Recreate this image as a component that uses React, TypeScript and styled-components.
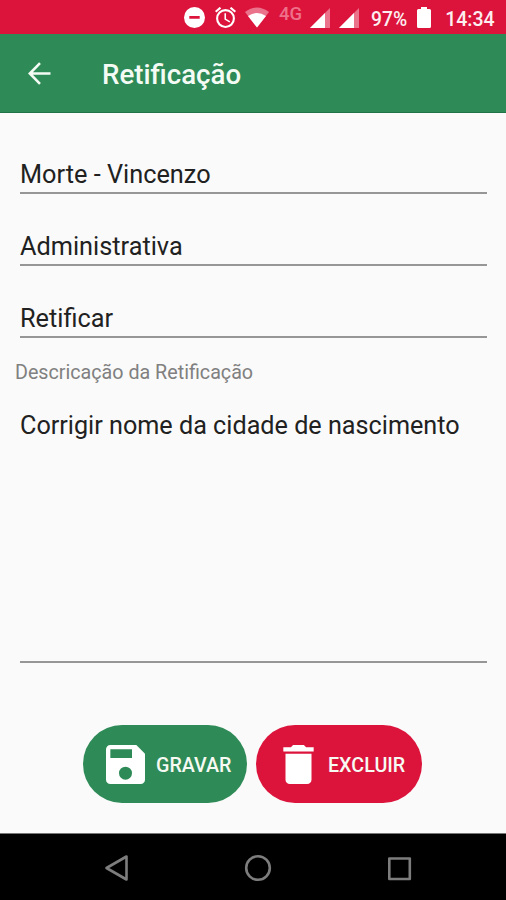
import React from "react";
import styled, { createGlobalStyle } from "styled-components";

const GlobalStyle = createGlobalStyle`
  * { box-sizing: border-box; }
  body { margin: 0; background: #fafafa; font-family: Roboto, sans-serif; }
`;

const Screen = styled.div`
  width: 506px;
  height: 900px;
  display: flex;
  flex-direction: column;
  background: #fafafa;
  overflow: hidden;
`;

const StatusBar = styled.header`
  height: 34px;
  flex: none;
  display: flex;
  align-items: flex-start;
  background: #dc143c;
  color: #fdeef0;
  padding-left: 184px;
`;

const StatusIcon = styled.svg<{ $gap?: number }>`
  flex: none;
  display: block;
  margin: 7px 0 0 ${(p) => p.$gap ?? 0}px;
  fill: #fff;
`;

const StatusText = styled.span<{ $gap: number; $size?: number }>`
  font-size: ${(p) => p.$size ?? 19.5}px;
  font-weight: 500;
  line-height: 22px;
  margin: 9px 0 0 ${(p) => p.$gap}px;
  white-space: nowrap;
`;

const NetworkLabel = styled.span`
  font-size: 18.5px;
  font-weight: 500;
  line-height: 20px;
  width: 24px;
  margin: 4px 0 0 9px;
  color: #ee7089;
`;

const AppBar = styled.div`
  height: 79px;
  flex: none;
  display: flex;
  align-items: center;
  padding-left: 28px;
  background: #2e8b57;
  border-bottom: 1px solid #207346;
`;

const Title = styled.h1`
  margin: 3px 0 0 51px;
  font-size: 27.7px;
  line-height: 34px;
  font-weight: 500;
  color: #f4fbf5;
`;

const Form = styled.main`
  flex: 1;
  display: flex;
  flex-direction: column;
  padding: 42px 19px 0 20px;
`;

const Field = styled.div<{ $height: number; $gap?: number }>`
  flex: none;
  height: ${(p) => p.$height}px;
  margin-top: ${(p) => p.$gap ?? 0}px;
  border-bottom: 2px solid #969696;
  font-size: 25.3px;
  line-height: 40px;
  color: #212121;
  white-space: nowrap;
`;

const DescriptionField = styled(Field)`
  font-size: 25.2px;
  line-height: 38px;
`;

const Label = styled.label`
  margin: 22px 0 0 -5px;
  font-size: 19.7px;
  line-height: 26px;
  color: #808080;
`;

const Actions = styled.div`
  display: flex;
  gap: 9px;
  margin: 62px 0 0 63px;
`;

const ActionButton = styled.button<{ $color: string; $width: number; $inset: number; $gap: number }>`
  width: ${(p) => p.$width}px;
  height: 78px;
  flex: none;
  display: flex;
  align-items: center;
  gap: ${(p) => p.$gap}px;
  padding: 0 0 0 ${(p) => p.$inset}px;
  border: 0;
  border-radius: 39px;
  background: ${(p) => p.$color};
  color: #f6faf3;
  font: 500 19.7px/24px Roboto, sans-serif;
  svg { flex: none; fill: #fff; }
  span { padding-top: 4px; }
`;

const NavBar = styled.nav`
  height: 67px;
  flex: none;
  display: flex;
  align-items: center;
  justify-content: space-between;
  padding: 1px 93px 0 102px;
  background: #000;
  border-top: 1px solid #777;
  svg { fill: none; stroke: #7d7d7d; stroke-width: 2.6; stroke-linejoin: round; }
`;

const Signal = ({ gap }: { gap: number }) => (
  <StatusIcon width="20" height="21" viewBox="0 0 20 21" $gap={gap}>
    <path d="M0 21 20 1v20z" opacity="0.4" />
    <path d="M0 21 15 6v15z" />
  </StatusIcon>
);

export default function App() {
  return (
    <>
      <GlobalStyle />
      <Screen>
        <StatusBar>
          <StatusIcon width="21" height="21" viewBox="0 0 21 21">
            <path fillRule="evenodd" d="M10.5 0a10.5 10.5 0 1 0 0 21a10.5 10.5 0 0 0 0-21M5.3 9h10.4v2.7H5.3z" />
          </StatusIcon>
          <StatusIcon width="21" height="21" viewBox="2 2 20 20" $gap={10}>
            <path d="m22 5.72-4.6-3.86-1.29 1.53 4.6 3.86zM7.88 3.39 6.6 1.86 2 5.71l1.29 1.53zM12.5 8H11v6l4.75 2.85.75-1.23-4-2.37zM12 4a9 9 0 1 0 0 18 9 9 0 0 0 0-18m0 16a7 7 0 1 1 0-14 7 7 0 0 1 0 14" />
          </StatusIcon>
          <StatusIcon width="26" height="21" viewBox="0 0 26 21" $gap={8}>
            <path d="M1 5Q13-4 25 5L13 20.5z" opacity="0.4" />
            <path d="M4 9Q13 3 22 9L13 20.5z" />
          </StatusIcon>
          <NetworkLabel>4G</NetworkLabel>
          <Signal gap={7} />
          <Signal gap={9} />
          <StatusText $gap={12} $size={19.3}>97%</StatusText>
          <StatusIcon width="14" height="21" viewBox="0 0 14 21" $gap={10}>
            <path d="M4 0h6v2h2.5q1.5 0 1.5 1.5v16q0 1.5-1.5 1.5h-11Q0 21 0 19.5v-16Q0 2 1.5 2H4z" />
          </StatusIcon>
          <StatusText $gap={14}>14:34</StatusText>
        </StatusBar>
        <AppBar>
          <svg width="23" height="23" viewBox="0 0 23 23" fill="none" stroke="#f4fbf5" strokeWidth="2.6">
            <path d="M22.5 11.5H2M12 1.2 1.8 11.5 12 21.8" />
          </svg>
          <Title>Retificação</Title>
        </AppBar>
        <Form>
          <Field $height={39}>Morte - Vincenzo</Field>
          <Field $height={39} $gap={33}>Administrativa</Field>
          <Field $height={39} $gap={33}>Retificar</Field>
          <Label>Descricação da Retificação</Label>
          <DescriptionField $height={256} $gap={21}>Corrigir nome da cidade de nascimento</DescriptionField>
          <Actions>
            <ActionButton $color="#2e8b57" $width={164} $inset={23} $gap={11}>
              <svg width="39" height="39" viewBox="3 3 18 18">
                <path d="M17 3H5a2 2 0 0 0-2 2v14a2 2 0 0 0 2 2h14c1.1 0 2-.9 2-2V7zm-5 16a3 3 0 1 1 0-6 3 3 0 0 1 0 6m3-10H5V5h10z" />
              </svg>
              <span>GRAVAR</span>
            </ActionButton>
            <ActionButton $color="#dc143c" $width={166} $inset={27} $gap={14}>
              <svg width="31" height="39" viewBox="5 3 14 18">
                <path d="M6 19c0 1.1.9 2 2 2h8c1.1 0 2-.9 2-2V7H6zM19 4h-3.5l-1-1h-5l-1 1H5v2h14z" />
              </svg>
              <span>EXCLUIR</span>
            </ActionButton>
          </Actions>
        </Form>
        <NavBar>
          <svg width="28" height="28" viewBox="0 0 28 28"><path d="M4.5 14 24.500 2.500v23z" /></svg>
          <svg width="28" height="28" viewBox="0 0 28 28"><circle cx="14" cy="14" r="11.8" /></svg>
          <svg width="28" height="28" viewBox="0 0 28 28"><path d="M4.3 4.500h20.500v20.500H4.300z" /></svg>
        </NavBar>
      </Screen>
    </>
  );
}
